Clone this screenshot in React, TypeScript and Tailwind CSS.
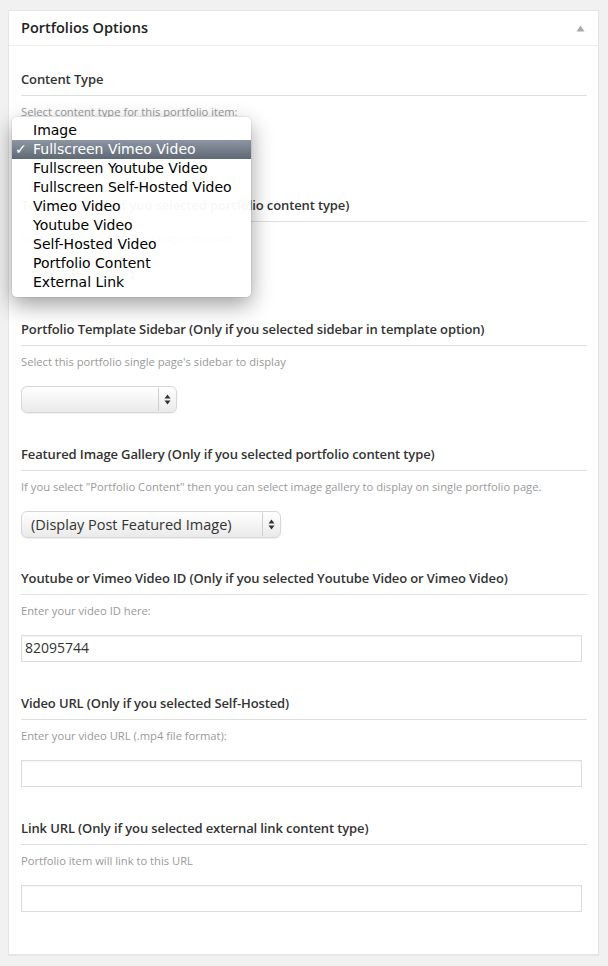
import React from "react";

const OPEN = { fontFamily: '"Open Sans", "Noto Sans", sans-serif' };
const MENU = { fontFamily: '"DejaVu Sans", "Liberation Sans", sans-serif' };

function Arrows() {
  return (
    <svg width="7" height="11" viewBox="0 0 7 11">
      <path d="M3.5 0.5 L6.5 4.5 L0.5 4.5 Z" fill="#333" />
      <path d="M3.5 10.5 L6.5 6.5 L0.5 6.5 Z" fill="#333" />
    </svg>
  );
}

function SelectBox({ className, text }: { className: string; text?: string }) {
  return (
    <div
      className={
        "flex h-[27px] rounded-[6px] border border-[#d6d6d6] bg-gradient-to-b from-white to-[#eaeaea] shadow-[0_1px_1px_rgba(0,0,0,0.06)] " +
        className
      }
    >
      <div className="flex-1 pl-[9px] text-[14.5px] leading-[25px] text-[#333] whitespace-nowrap overflow-hidden">{text}</div>
      <div className="w-[18px] my-[1px] border-l border-[#cfcfcf] flex items-center justify-center">
        <Arrows />
      </div>
    </div>
  );
}

function TextInput({ value }: { value?: string }) {
  return (
    <div className="h-[27px] mr-[5px] border border-[#dcdcdc] bg-white shadow-[inset_0_1px_2px_rgba(0,0,0,0.05)] pl-[3px] text-[14px] leading-[24px] text-[#333]">
      {value}
    </div>
  );
}

function Section({
  title,
  desc,
  children,
  last,
  first,
}: {
  title: string;
  desc: string;
  children: React.ReactNode;
  last?: boolean;
  first?: boolean;
}) {
  return (
    <div className={last ? "" : first ? "mb-[32.6px]" : "mb-[31.6px]"}>
      <div className="pb-[7px] border-b border-[#dfdfdf] text-[13px] leading-[18px] font-semibold tracking-[-0.12px] text-[#333]">
        {title}
      </div>
      <div className="mt-[8px] text-[11.2px] leading-[16px] text-[#999]">{desc}</div>
      <div className="mt-[16px]">{children}</div>
    </div>
  );
}

const items = [
  "Image",
  "Fullscreen Vimeo Video",
  "Fullscreen Youtube Video",
  "Fullscreen Self-Hosted Video",
  "Vimeo Video",
  "Youtube Video",
  "Self-Hosted Video",
  "Portfolio Content",
  "External Link",
];

export default function App() {
  return (
    <div className="min-h-[966px] bg-[#f1f1f1] pt-[10px] pl-[8px] pr-[9px] pb-[12px]" style={OPEN}>
      <div className="relative bg-white border border-[#e5e5e5] shadow-[0_1px_1px_rgba(0,0,0,0.04)]">
        <div className="h-[35px] border-b border-[#eeeeee] flex items-center justify-between pl-[12px] pr-[12px]">
          <div className="text-[14.5px] font-semibold text-[#222] leading-[20px]">Portfolios Options</div>
          <svg width="9" height="7" viewBox="0 0 9 7" className="mr-[1px]">
            <path d="M4.5 0.5 L8.5 6.5 L0.5 6.5 Z" fill="#aaa" />
          </svg>
        </div>
        <div className="pl-[12px] pr-[11px] pt-[24px] pb-[42px]">
          <Section first title="Content Type" desc="Select content type for this portfolio item:">
            <SelectBox className="w-[228px]" text="Fullscreen Vimeo Video" />
          </Section>
          <Section
            title="Template (Only if you selected portfolio content type)"
            desc="Select this portfolio single page template"
          >
            <SelectBox className="w-[121px]" text="Default" />
          </Section>
          <Section
            title="Portfolio Template Sidebar (Only if you selected sidebar in template option)"
            desc="Select this portfolio single page's sidebar to display"
          >
            <SelectBox className="w-[156px]" />
          </Section>
          <Section
            title="Featured Image Gallery (Only if you selected portfolio content type)"
            desc={'If you select "Portfolio Content" then you can select image gallery to display on single portfolio page.'}
          >
            <SelectBox className="w-[260px]" text="(Display Post Featured Image)" />
          </Section>
          <Section
            title="Youtube or Vimeo Video ID (Only if you selected Youtube Video or Vimeo Video)"
            desc="Enter your video ID here:"
          >
            <TextInput value="82095744" />
          </Section>
          <Section title="Video URL (Only if you selected Self-Hosted)" desc="Enter your video URL (.mp4 file format):">
            <TextInput />
          </Section>
          <Section
            title="Link URL (Only if you selected external link content type)"
            desc="Portfolio item will link to this URL"
            last
          >
            <TextInput />
          </Section>
        </div>

        {/* Open native dropdown menu */}
        <div
          className="absolute left-[3px] top-[106px] w-[239px] rounded-[5px] bg-white/[0.96] pt-[4px] pb-[5px] shadow-[0_8px_22px_rgba(0,0,0,0.38),0_0_0_1px_rgba(0,0,0,0.06)]"
          style={MENU}
        >
          {items.map((it, i) => (
            <div
              key={it}
              className={
                "relative h-[19px] pl-[21px] text-[14px] leading-[19px] whitespace-nowrap " +
                (i === 1
                  ? "bg-gradient-to-b from-[#8d96a2] to-[#5f6875] text-white"
                  : "text-black")
              }
            >
              {i === 1 && <span className="absolute left-[3px] top-0">✓</span>}
              {it}
            </div>
          ))}
        </div>
      </div>
    </div>
  );
}
